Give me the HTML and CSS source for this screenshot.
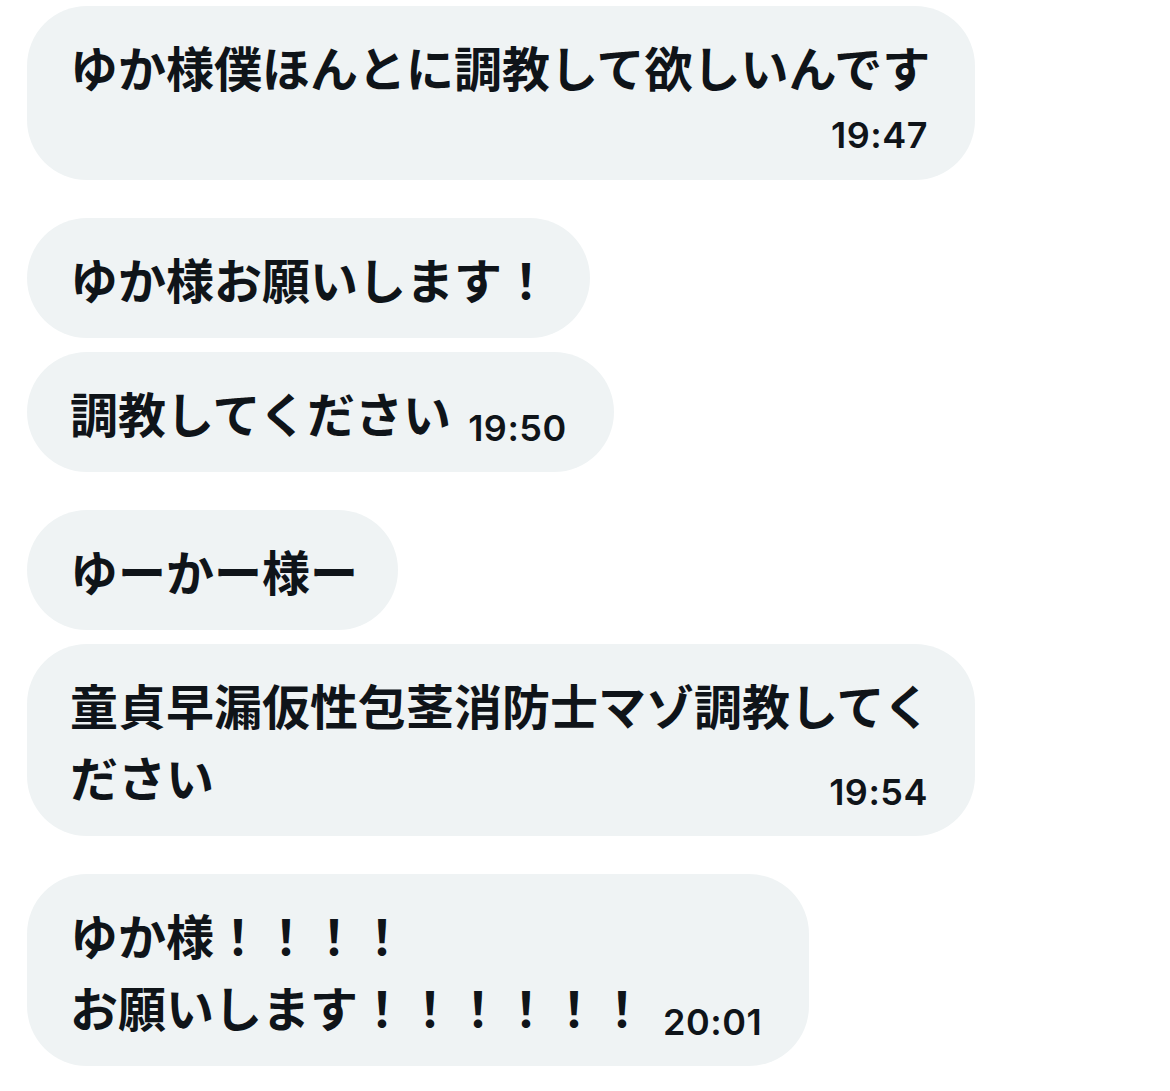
FILE: index.html
```html
<!DOCTYPE html>
<html lang="ja">
<head>
<meta charset="utf-8">
<title>DM</title>
<link rel="stylesheet" href="styles.css">
</head>
<body>
<main class="thread">
  <section class="group">
    <div class="bubble"><span class="text">ゆか様僕ほんとに調教して欲しいんです</span><span class="time time--below">19:47</span></div>
  </section>
  <section class="group">
    <div class="bubble"><span class="text">ゆか様お願いします！</span></div>
    <div class="bubble"><span class="text">調教してください</span><span class="time">19:50</span></div>
  </section>
  <section class="group">
    <div class="bubble"><span class="text">ゆーかー様ー</span></div>
    <div class="bubble"><span class="text">童貞早漏仮性包茎消防士マゾ調教してください</span><span class="time">19:54</span></div>
  </section>
  <section class="group">
    <div class="bubble"><span class="text">ゆか様！！！！<br>お願いします！！！！！！</span><span class="time">20:01</span></div>
  </section>
</main>
</body>
</html>
```

FILE: styles.css
```css
* {
  box-sizing: border-box;
}

html, body {
  margin: 0;
  padding: 0;
  background: #ffffff;
}

body {
  width: 1170px;
  min-height: 1091px;
  font-family: "Noto Sans CJK JP", "Noto Sans", sans-serif;
  color: #0f1419;
}

.thread {
  display: flex;
  flex-direction: column;
  align-items: flex-start;
  gap: 38px;
  padding: 6px 0 0 27px;
}

.group {
  display: flex;
  flex-direction: column;
  align-items: flex-start;
  gap: 14px;
}

.bubble {
  display: flow-root;
  max-width: 948px;
  padding: 24px 40px 24px 43px;
  background: #eff3f4;
  border-radius: 60px;
  font-size: 48px;
  line-height: 72px;
  font-weight: 700;
}

.time {
  float: right;
  margin: 35px 7px 0 17px;
  font-family: Inter, "Liberation Sans", sans-serif;
  font-size: 36px;
  line-height: 35px;
  font-weight: 600;
  letter-spacing: 0.5px;
}

.time--below {
  margin: 16px 7px 3px 17px;
}
```
